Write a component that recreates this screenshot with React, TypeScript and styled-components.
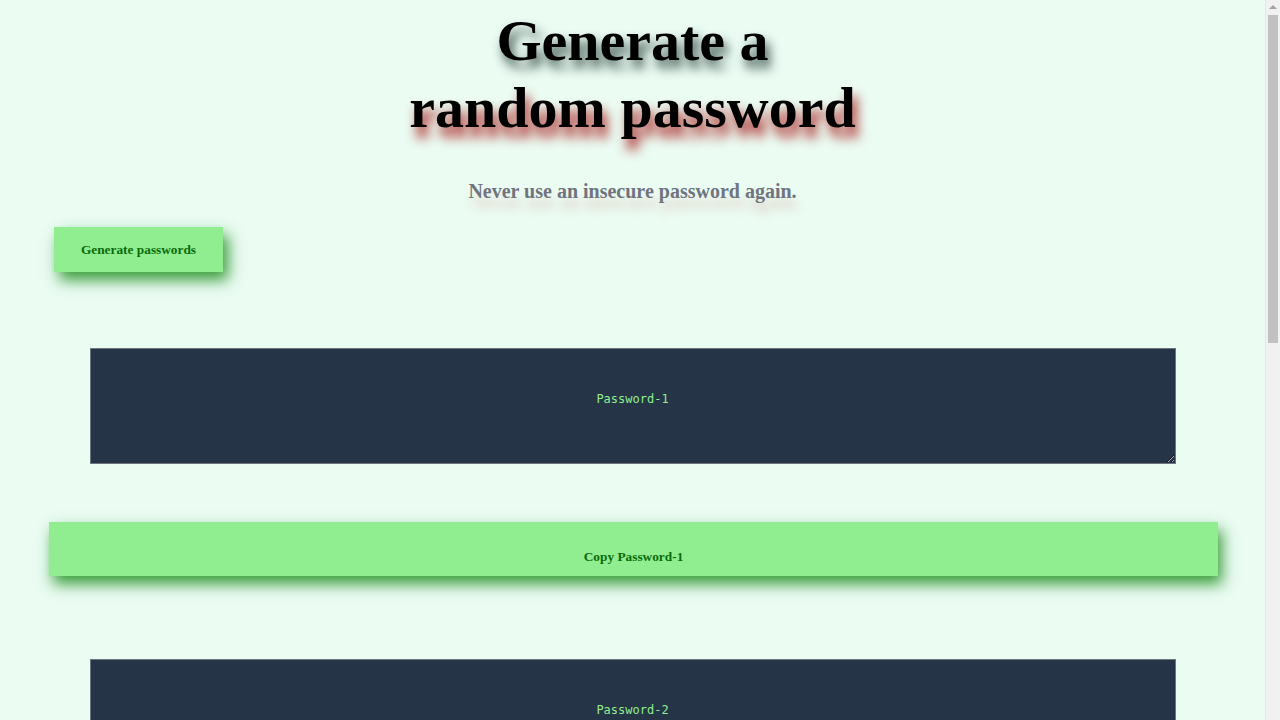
import React from "react";
import styled, { createGlobalStyle } from "styled-components";

const GlobalStyle = createGlobalStyle`
  html, body {
    margin: 0;
    padding: 0;
    background: #ebfcf3;
  }
  body {
    font-family: "Liberation Serif", "Times New Roman", serif;
  }
`;

const Page = styled.main`
  width: 1265px;
  display: flex;
  flex-direction: column;
  align-items: stretch;
  padding: 7px 0 80px;
`;

const Title = styled.h1`
  margin: 0 auto;
  width: 480px;
  font-family: "Liberation Serif", "Times New Roman", serif;
  font-size: 58px;
  line-height: 67px;
  font-weight: 700;
  color: #000;
  text-align: center;
`;

const TitleLine = styled.span<{ $shadow: string }>`
  display: block;
  text-shadow: ${(p) => p.$shadow};
`;

const Subtitle = styled.p`
  margin: 39px 0 0;
  font-family: "Liberation Serif", "Times New Roman", serif;
  font-size: 20px;
  line-height: 23px;
  font-weight: 700;
  color: #70747f;
  text-align: center;
  text-shadow: 3px 11px 10px rgba(210, 120, 110, 0.3);
`;

const GenerateButton = styled.button`
  align-self: flex-start;
  margin: 24px 0 0 54px;
  width: 169px;
  height: 45px;
  padding: 0;
  border: none;
  background: #90ee90;
  color: #0b6b0b;
  font-family: "Liberation Serif", "Times New Roman", serif;
  font-size: 13.33px;
  font-weight: 700;
  cursor: pointer;
  box-shadow: 5px 8px 14px rgba(25, 140, 25, 0.85);
`;

const List = styled.section`
  display: flex;
  flex-direction: column;
  margin-top: 76px;
`;

const Entry = styled.div`
  display: flex;
  flex-direction: column;
  align-items: center;
  padding-bottom: 83px;
`;

const PasswordBox = styled.textarea`
  box-sizing: border-box;
  width: 1086px;
  height: 116px;
  margin: 0;
  padding: 43px 10px 10px;
  border: 1px solid #6e7480;
  background: #263447;
  color: #90ee90;
  font-family: "DejaVu Sans Mono", "Liberation Mono", monospace;
  font-size: 12px;
  line-height: 14px;
  text-align: center;
  outline: none;
`;

const CopyButton = styled.button`
  box-sizing: border-box;
  margin-top: 58px;
  margin-left: 2px;
  width: 1169px;
  height: 54px;
  padding: 27px 0 11px;
  border: none;
  background: #90ee90;
  color: #0b6b0b;
  font-family: "Liberation Serif", "Times New Roman", serif;
  font-size: 13.33px;
  line-height: 16px;
  font-weight: 700;
  cursor: pointer;
  box-shadow: 4px 8px 14px rgba(25, 140, 25, 0.85);
`;

const ScrollTrack = styled.div`
  position: fixed;
  top: 0;
  right: 0;
  width: 15px;
  height: 100vh;
  background: #f1f1f1;
  border-left: 1px solid #e6e6e6;
  box-sizing: border-box;
`;

const ScrollArrow = styled.div`
  position: absolute;
  top: 5px;
  left: 3px;
  width: 0;
  height: 0;
  border-left: 4px solid transparent;
  border-right: 4px solid transparent;
  border-bottom: 4px solid #a3a3a3;
`;

const ScrollThumb = styled.div`
  position: absolute;
  top: 15px;
  left: 2px;
  width: 10px;
  height: 328px;
  background: #c1c1c1;
`;

const passwords = ["Password-1", "Password-2", "Password-3", "Password-4"];

export default function App() {
  return (
    <>
      <GlobalStyle />
      <Page>
        <Title>
          <TitleLine $shadow="4px 8px 11px rgba(30, 55, 48, 0.85)">Generate a</TitleLine>
          <TitleLine $shadow="4px 10px 12px rgba(165, 22, 22, 0.95)">random password</TitleLine>
        </Title>
        <Subtitle>Never use an insecure password again.</Subtitle>
        <GenerateButton>Generate passwords</GenerateButton>
        <List>
          {passwords.map((p) => (
            <Entry key={p}>
              <PasswordBox readOnly value={p} />
              <CopyButton>Copy {p}</CopyButton>
            </Entry>
          ))}
        </List>
      </Page>
      <ScrollTrack>
        <ScrollArrow />
        <ScrollThumb />
      </ScrollTrack>
    </>
  );
}
